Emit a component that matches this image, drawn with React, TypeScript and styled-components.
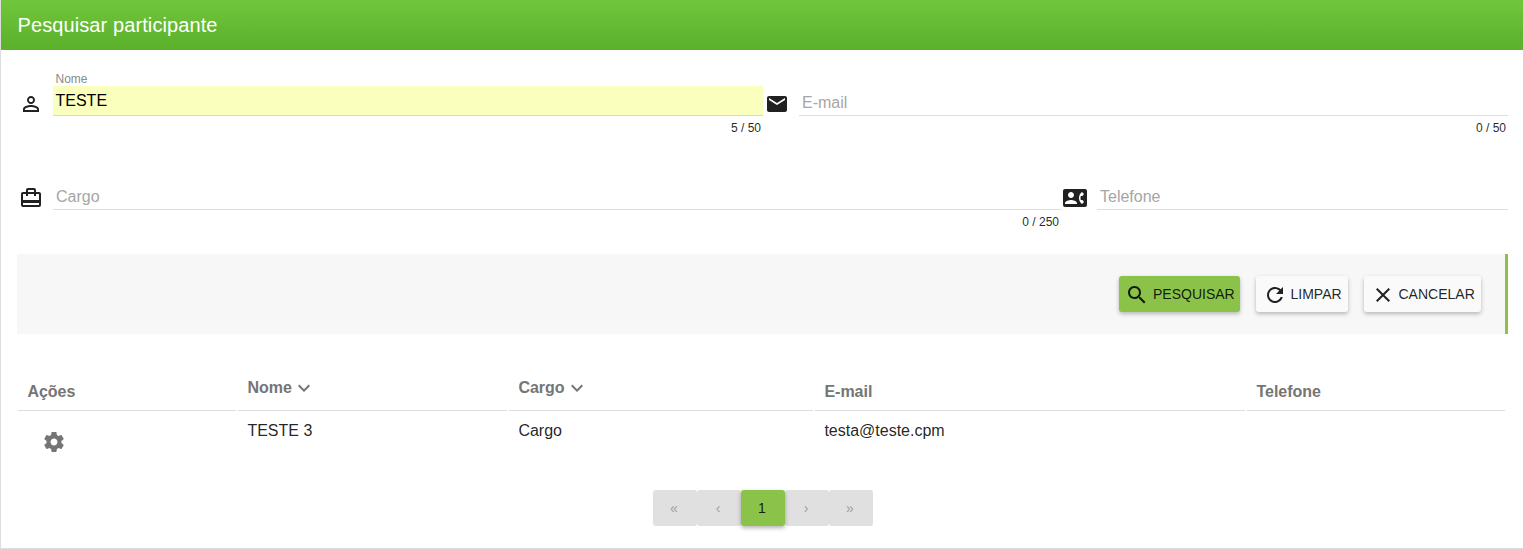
import React from 'react';
import styled, { createGlobalStyle, css } from 'styled-components';

const GlobalStyle = createGlobalStyle`
  *, *::before, *::after { box-sizing: border-box; }
  body {
    margin: 0;
    background: #fff;
    color: rgba(0, 0, 0, 0.87);
    font-family: "Liberation Sans", Arial, sans-serif;
    font-size: 16px;
  }
  input, button { font: inherit; color: inherit; letter-spacing: inherit; }
`;

const paths = {
  person:
    'M12 5.9c1.16 0 2.1.94 2.1 2.1s-.94 2.1-2.1 2.1S9.9 9.16 9.9 8s.94-2.1 2.1-2.1m0 9c2.97 0 6.1 1.46 6.1 2.1v1.1H5.9V17c0-.64 3.13-2.1 6.1-2.1M12 4C9.79 4 8 5.79 8 8s1.79 4 4 4 4-1.79 4-4-1.79-4-4-4zm0 9c-2.67 0-8 1.34-8 4v3h16v-3c0-2.66-5.33-4-8-4z',
  email:
    'M20 4H4c-1.1 0-1.99.9-1.99 2L2 18c0 1.1.9 2 2 2h16c1.1 0 2-.9 2-2V6c0-1.1-.9-2-2-2zm0 4l-8 5-8-5V6l8 5 8-5v2z',
  travel:
    'M20 6h-3V4c0-1.11-.89-2-2-2H9c-1.11 0-2 .89-2 2v2H4c-1.11 0-2 .89-2 2v11c0 1.11.89 2 2 2h16c1.11 0 2-.89 2-2V8c0-1.11-.89-2-2-2zM9 4h6v2H9V4zm11 15H4v-2h16v2zm0-5H4V8h3v2h2V8h6v2h2V8h3v6z',
  contact:
    'M22 3H2C.9 3 0 3.9 0 5v14c0 1.1.9 2 2 2h20c1.1 0 1.99-.9 1.99-2L24 5c0-1.1-.9-2-2-2zM8 6c1.66 0 3 1.34 3 3s-1.34 3-3 3-3-1.34-3-3 1.34-3 3-3zm6 12H2v-1c0-2 4-3.1 6-3.1s6 1.1 6 3.1v1zm3.85-4h1.64L21 16l-1.99 1.99c-1.31-.98-2.28-2.38-2.73-3.99-.18-.64-.28-1.31-.28-2s.1-1.36.28-2c.45-1.62 1.42-3.01 2.73-3.99L21 8l-1.51 2h-1.64c-.22.63-.35 1.3-.35 2s.13 1.37.35 2z',
  search:
    'M15.5 14h-.79l-.28-.27C15.41 12.59 16 11.11 16 9.5 16 5.91 13.09 3 9.5 3S3 5.91 3 9.5 5.91 16 9.5 16c1.61 0 3.09-.59 4.23-1.57l.27.28v.79l5 4.99L20.49 19l-4.99-5zm-6 0C7.01 14 5 11.99 5 9.5S7.01 5 9.5 5 14 7.01 14 9.5 11.99 14 9.5 14z',
  refresh:
    'M17.65 6.35C16.2 4.9 14.21 4 12 4c-4.42 0-7.99 3.58-7.99 8s3.57 8 7.99 8c3.73 0 6.84-2.55 7.73-6h-2.08c-.82 2.33-3.04 4-5.65 4-3.31 0-6-2.69-6-6s2.69-6 6-6c1.66 0 3.14.69 4.22 1.78L13 11h7V4l-2.35 2.35z',
  clear:
    'M19 6.41L17.59 5 12 10.59 6.41 5 5 6.41 10.59 12 5 17.59 6.41 19 12 13.41 17.59 19 19 17.59 13.41 12z',
  expand: 'M16.59 8.59L12 13.17 7.41 8.59 6 10l6 6 6-6z',
  settings:
    'M19.43 12.98c.04-.32.07-.64.07-.98s-.03-.66-.07-.98l2.11-1.65c.19-.15.24-.42.12-.64l-2-3.46c-.12-.22-.39-.3-.61-.22l-2.49 1c-.52-.4-1.08-.73-1.69-.98l-.38-2.65C14.46 2.18 14.25 2 14 2h-4c-.25 0-.46.18-.49.42l-.38 2.65c-.61.25-1.17.59-1.69.98l-2.49-1c-.23-.09-.49 0-.61.22l-2 3.46c-.13.22-.07.49.12.64l2.11 1.65c-.04.32-.07.65-.07.98s.03.66.07.98l-2.11 1.65c-.19.15-.24.42-.12.64l2 3.46c.12.22.39.3.61.22l2.49-1c.52.4 1.08.73 1.69.98l.38 2.65c.03.24.24.42.49.42h4c.25 0 .46-.18.49-.42l.38-2.65c.61-.25 1.17-.59 1.69-.98l2.49 1c.23.09.49 0 .61-.22l2-3.46c.12-.22.07-.49-.12-.64l-2.11-1.65zM12 15.5c-1.93 0-3.5-1.57-3.5-3.5s1.57-3.5 3.5-3.5 3.5 1.57 3.5 3.5-1.57 3.5-3.5 3.5z',
};

const Svg = styled.svg`
  display: block;
  flex: none;
  width: 24px;
  height: 24px;
  fill: currentColor;
`;

const Icon = ({ name }: { name: keyof typeof paths }) => (
  <Svg viewBox="0 0 24 24" aria-hidden="true">
    <path d={paths[name]} />
  </Svg>
);

const Panel = styled.main`
  height: 549px;
  border-left: 1px solid #ddd;
  border-bottom: 1px solid #ddd;
  overflow: hidden;
`;

const Header = styled.header`
  display: flex;
  align-items: center;
  height: 50px;
  padding: 0 16px;
  background: linear-gradient(#70c63b, #5bb02c);
  color: #fff;
`;

const Title = styled.h1`
  margin: 0;
  padding-left: 0.5px;
  font-size: 20px;
  font-weight: 400;
  line-height: 24px;
  letter-spacing: 0.1px;
`;

const Content = styled.div`
  padding: 0 15px 0 16px;
`;

const FieldRow = styled.div<{ $columns: string; $top: number }>`
  display: grid;
  grid-template-columns: ${(p) => p.$columns};
  padding-top: ${(p) => p.$top}px;
`;

const FieldCell = styled.div<{ $inset?: number }>`
  display: grid;
  grid-template-columns: ${(p) => 36 - (p.$inset ?? 2)}px 1fr;
  padding-left: ${(p) => p.$inset ?? 2}px;
`;

const FieldIcon = styled.div`
  padding-top: 22px;
`;

const FieldBody = styled.div`
  display: flex;
  flex-direction: column;
  min-width: 0;
`;

const Label = styled.label`
  height: 16px;
  padding-left: 2.5px;
  color: #8a8a8a;
  font-size: 12px;
  line-height: 18px;
`;

const Input = styled.input<{ $filled?: boolean }>`
  width: 100%;
  height: 30px;
  padding: ${(p) => (p.$filled ? '1px 2px 0 2.5px' : '5px 2px 0 3px')};
  border: 0;
  border-bottom: 1px solid ${(p) => (p.$filled ? '#d9ddae' : '#dedede')};
  border-radius: 0;
  outline: 0;
  background: ${(p) => (p.$filled ? '#faffbd' : 'transparent')};
  color: ${(p) => (p.$filled ? '#000' : 'inherit')};
  &::placeholder { color: #a6a6a6; opacity: 1; }
`;

const Counter = styled.div`
  height: 24px;
  padding-right: 2px;
  text-align: right;
  font-size: 12px;
  line-height: 24px;
`;

const ActionBar = styled.div`
  display: flex;
  justify-content: flex-end;
  align-items: center;
  gap: 16px;
  height: 80px;
  margin-top: 20px;
  padding-right: 24px;
  border-right: 3px solid #8bc34a;
  background: #f7f7f7;
`;

const primary = css`
  background: #8bc34a;
  color: rgba(0, 0, 0, 0.87);
`;

const Button = styled.button<{ $primary?: boolean; $width: number }>`
  display: flex;
  align-items: center;
  gap: 4px;
  width: ${(p) => p.$width}px;
  height: 36px;
  padding: 1px 0 0 6.5px;
  border: 0;
  border-radius: 3px;
  background: #fafafa;
  box-shadow: 0 2px 4px rgba(0, 0, 0, 0.26);
  font-size: 14px;
  white-space: nowrap;
  ${(p) => p.$primary && css`
    ${primary}
    padding-left: 6px;
  `}
`;

const ButtonText = styled.span`
  margin-top: -1px;
  line-height: 20px;
`;

const TableGrid = styled.div`
  display: grid;
  grid-template-columns: 218px 269px 304px 430px 258px;
  column-gap: 2px;
  margin: 30px 0 0 1px;
`;

const HeadCell = styled.div<{ $sortable?: boolean }>`
  display: flex;
  align-items: flex-start;
  gap: 0.5px;
  height: 47px;
  padding: ${(p) => (p.$sortable ? 12 : 16)}px 0 0 9.4px;
  border-bottom: 1px solid #dedede;
  color: #757575;
  font-weight: 700;
  line-height: 24px;
`;

const Cell = styled.div`
  height: 60px;
  padding: 8px 0 0 9.4px;
  line-height: 24px;
`;

const GearButton = styled.button`
  display: block;
  margin: 11px 0 0 15px;
  padding: 0;
  border: 0;
  background: none;
  color: #757575;
`;

const Pagination = styled.nav`
  display: flex;
  justify-content: center;
  margin-top: 19px;
`;

const PageButton = styled.button<{ $active?: boolean }>`
  width: 44px;
  height: 36px;
  padding: 0 1px 0 0;
  border: 0;
  border-radius: 3px;
  background: #e0e0e0;
  color: #a0a0a0;
  font-size: 14px;
  ${(p) =>
    p.$active &&
    css`
      ${primary}
      position: relative;
      box-shadow: 0 2px 4px rgba(0, 0, 0, 0.3);
    `}
`;

export default function App() {
  return (
    <>
      <GlobalStyle />
      <Panel>
        <Header>
          <Title>Pesquisar participante</Title>
        </Header>
        <Content>
          <FieldRow $top={20} $columns="746px 1fr">
            <FieldCell $inset={2.4}>
              <FieldIcon><Icon name="person" /></FieldIcon>
              <FieldBody>
                <Label htmlFor="nome">Nome</Label>
                <Input id="nome" $filled defaultValue="TESTE" />
                <Counter>5 / 50</Counter>
              </FieldBody>
            </FieldCell>
            <FieldCell $inset={1.5}>
              <FieldIcon><Icon name="email" /></FieldIcon>
              <FieldBody>
                <Label htmlFor="email" />
                <Input id="email" placeholder="E-mail" />
                <Counter>0 / 50</Counter>
              </FieldBody>
            </FieldCell>
          </FieldRow>
          <FieldRow $top={24} $columns="1044px 1fr">
            <FieldCell $inset={2.4}>
              <FieldIcon><Icon name="travel" /></FieldIcon>
              <FieldBody>
                <Label htmlFor="cargo" />
                <Input id="cargo" placeholder="Cargo" />
                <Counter>0 / 250</Counter>
              </FieldBody>
            </FieldCell>
            <FieldCell $inset={1.5}>
              <FieldIcon><Icon name="contact" /></FieldIcon>
              <FieldBody>
                <Label htmlFor="telefone" />
                <Input id="telefone" placeholder="Telefone" />
              </FieldBody>
            </FieldCell>
          </FieldRow>
          <ActionBar>
            <Button $primary $width={121}>
              <Icon name="search" />
              <ButtonText>PESQUISAR</ButtonText>
            </Button>
            <Button $width={92}>
              <Icon name="refresh" />
              <ButtonText>LIMPAR</ButtonText>
            </Button>
            <Button $width={117}>
              <Icon name="clear" />
              <ButtonText>CANCELAR</ButtonText>
            </Button>
          </ActionBar>
          <TableGrid>
            <HeadCell>Ações</HeadCell>
            <HeadCell $sortable>Nome<Icon name="expand" /></HeadCell>
            <HeadCell $sortable>Cargo<Icon name="expand" /></HeadCell>
            <HeadCell>E-mail</HeadCell>
            <HeadCell>Telefone</HeadCell>
            <Cell>
              <GearButton aria-label="Ações"><Icon name="settings" /></GearButton>
            </Cell>
            <Cell>TESTE 3</Cell>
            <Cell>Cargo</Cell>
            <Cell>testa@teste.cpm</Cell>
            <Cell />
          </TableGrid>
          <Pagination>
            <PageButton>«</PageButton>
            <PageButton>‹</PageButton>
            <PageButton $active>1</PageButton>
            <PageButton>›</PageButton>
            <PageButton>»</PageButton>
          </Pagination>
        </Content>
      </Panel>
    </>
  );
}
